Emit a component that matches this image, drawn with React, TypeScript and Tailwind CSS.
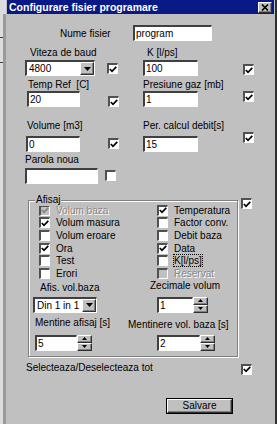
import React from "react";

function Check({ checked = false, disabled = false, className = "" }: { checked?: boolean; disabled?: boolean; className?: string }) {
  return (
    <div
      className={`w-[11px] h-[11px] shrink-0 border-t-2 border-l-2 border-t-[#505050] border-l-[#505050] border-b border-r border-b-white border-r-white flex items-center justify-center ${disabled ? "bg-[#c0c0c0]" : "bg-white"} ${className}`}
    >
      {checked && (
        <svg width="8" height="7" viewBox="0 0 8 7">
          <path d="M0.8 3 L3 5.3 L7.3 0.8" stroke={disabled ? "#808080" : "#000"} strokeWidth="1.7" fill="none" />
        </svg>
      )}
    </div>
  );
}

function Input({ value = "", className = "" }: { value?: string; className?: string }) {
  return (
    <div
      className={`h-[16px] shrink-0 bg-white border-t-2 border-l-2 border-t-[#404040] border-l-[#404040] border-b border-r border-b-white border-r-white pl-[1px] leading-[13px] text-black ${className}`}
    >
      {value}
    </div>
  );
}

function Raised({ className = "", children }: { className?: string; children?: React.ReactNode }) {
  return (
    <div
      className={`bg-[#c0c0c0] border border-t-white border-l-white border-b-[#303030] border-r-[#303030] shadow-[inset_-1px_-1px_0_#808080] flex items-center justify-center ${className}`}
    >
      {children}
    </div>
  );
}

function Down() {
  return (
    <svg width="7" height="4" viewBox="0 0 7 4">
      <path d="M0 0 H7 L3.5 4 Z" fill="#000" />
    </svg>
  );
}

function Up() {
  return (
    <svg width="5" height="3" viewBox="0 0 5 3">
      <path d="M0 3 H5 L2.5 0 Z" fill="#000" />
    </svg>
  );
}

function SmallDown() {
  return (
    <svg width="5" height="3" viewBox="0 0 5 3">
      <path d="M0 0 H5 L2.5 3 Z" fill="#000" />
    </svg>
  );
}

function Select({ value, className = "" }: { value: string; className?: string }) {
  return (
    <div
      className={`h-[16px] shrink-0 bg-white border-t-2 border-l-2 border-t-[#404040] border-l-[#404040] border-b border-r border-b-white border-r-white flex ${className}`}
    >
      <span className="flex-1 pl-[2px] leading-[13px]">{value}</span>
      <Raised className="w-[14px] h-[13px]">
        <Down />
      </Raised>
    </div>
  );
}

function Spinner({ value, inputClass }: { value: string; inputClass: string }) {
  return (
    <div className="flex h-[16px]">
      <Input value={value} className={inputClass} />
      <div className="flex flex-col w-[15px]">
        <Raised className="h-[8px] w-[15px]">
          <Up />
        </Raised>
        <Raised className="h-[8px] w-[15px]">
          <SmallDown />
        </Raised>
      </div>
    </div>
  );
}

function Item({ label, checked = false, disabled = false, focus = false }: { label: string; checked?: boolean; disabled?: boolean; focus?: boolean }) {
  return (
    <div className="flex items-center h-[12.6px]">
      <Check checked={checked} disabled={disabled} />
      <span
        className={`ml-[6px] leading-[11px] ${disabled ? "text-[#8a8a8a] [text-shadow:1px_1px_0_#ffffff]" : "text-black"} ${focus ? "outline outline-1 outline-dotted outline-black" : ""}`}
      >
        {label}
      </span>
    </div>
  );
}

export default function App() {
  return (
    <div className="w-[277px] h-[424px] flex font-['Liberation_Sans',Arial,sans-serif] text-[10px] text-black overflow-hidden">
      {/* left strip: other window behind */}
      <div className="w-[6px] h-full flex">
        <div className="w-[3px] h-full bg-[#dcdcdc] flex flex-col">
          <div className="h-[37px]" />
          <div className="h-[1px] w-[3px] bg-[#404040]" />
          <div className="h-[24px]" />
          <div className="h-[1px] w-[3px] bg-[#404040]" />
        </div>
        <div className="w-[3px] h-full flex flex-col">
          <div className="h-[14px] bg-[#dcdcf0]" />
          <div className="flex-1 bg-[#9a9a9a]" />
        </div>
      </div>

      {/* dialog */}
      <div className="flex-1 h-full bg-[#c0c0c0] border-r-2 border-r-[#303030] flex flex-col">
        {/* title bar */}
        <div className="h-[14px] mx-[1px] bg-[#0a1a84] flex items-center">
          <span className="pl-[2px] text-white font-bold text-[10.5px] leading-[14px] flex-1">Configurare fisier programare</span>
          <Raised className="w-[14px] h-[11px] mr-[2px]">
            <svg width="8" height="7" viewBox="0 0 8 7">
              <path d="M1 0.5 L7 6.5 M7 0.5 L1 6.5" stroke="#000" strokeWidth="1.6" />
            </svg>
          </Raised>
        </div>

        {/* Nume fisier */}
        <div className="flex items-center mt-[11px] h-[16px]">
          <span className="ml-[54px] w-[73px]">Nume fisier</span>
          <Input value="program" className="w-[79px]" />
        </div>

        {/* Viteza / K */}
        <div className="flex mt-[6px] h-[12px] leading-[12px]">
          <span className="ml-[24px] w-[117px]">Viteza de baud</span>
          <span>K [l/ps]</span>
        </div>
        <div className="flex items-start mt-[1px] h-[16px]">
          <Select value="4800" className="ml-[19px] w-[70px]" />
          <Check checked className="ml-[12px] mt-[3px]" />
          <Input value="100" className="ml-[25px] w-[55px]" />
          <Check checked className="ml-[45px] mt-[4px]" />
        </div>

        {/* Temp / Presiune */}
        <div className="flex mt-[3px] h-[12px] leading-[12px]">
          <span className="ml-[22px] w-[115px] whitespace-pre">Temp Ref  [C]</span>
          <span>Presiune gaz [mb]</span>
        </div>
        <div className="flex items-start h-[16px]">
          <Input value="20" className="ml-[21px] w-[53px]" />
          <Check checked className="ml-[28px] mt-[5px]" />
          <Input value="1" className="ml-[24px] w-[55px]" />
          <Check checked className="ml-[45px]" />
        </div>

        {/* Volume / Per calcul */}
        <div className="flex mt-[13px] h-[12px] leading-[12px]">
          <span className="ml-[21px] w-[116px]">Volume [m3]</span>
          <span>Per. calcul debit[s]</span>
        </div>
        <div className="flex items-start mt-[4px] h-[16px]">
          <Input value="0" className="ml-[20px] w-[54px]" />
          <Check checked className="ml-[28px] mt-[2px]" />
          <Input value="15" className="ml-[24px] w-[55px]" />
          <Check checked className="ml-[45px] mt-[-4px]" />
        </div>

        {/* Parola */}
        <div className="flex mt-[2px] h-[12px] leading-[12px]">
          <span className="ml-[19px]">Parola noua</span>
        </div>
        <div className="flex items-start mt-[2px] h-[16px]">
          <Input value="" className="ml-[19px] w-[73px]" />
          <Check className="ml-[7px] mt-[2px]" />
        </div>

        {/* Afisaj group */}
        <div className="flex items-start mt-[16px]">
          <div className="relative ml-[22px] w-[210px] border border-[#808080] shadow-[inset_1px_1px_0_#ffffff,1px_1px_0_#ffffff] pt-[3px] pb-[5px]">
            <span className="absolute top-[-7px] left-[6px] px-[1px] bg-[#c0c0c0] leading-[12px]">Afisaj</span>
            <div className="grid grid-cols-[118px_auto] ml-[10px]">
              <Item label="Volum baza" checked disabled />
              <Item label="Temperatura" checked />
              <Item label="Volum masura" checked />
              <Item label="Factor conv." />
              <Item label="Volum eroare" />
              <Item label="Debit baza" />
              <Item label="Ora" checked />
              <Item label="Data" checked />
              <Item label="Test" />
              <Item label="K[l/ps]" focus />
              <Item label="Erori" />
              <Item label="Reservat" disabled />
            </div>

            <div className="flex mt-[2px] h-[12px] leading-[12px]">
              <span className="ml-[11px] w-[110px]">Afis. vol.baza</span>
              <span className="mt-[-2px]">Zecimale volum</span>
            </div>
            <div className="flex items-start mt-[3px]">
              <Select value="Din 1 in 1" className="ml-[4px] w-[64px]" />
              <div className="ml-[60px]">
                <Spinner value="1" inputClass="w-[36px]" />
              </div>
            </div>

            <div className="flex mt-[4px] h-[12px] leading-[12px]">
              <span className="ml-[6px] w-[93px]">Mentine afisaj [s]</span>
              <span className="mt-[2px]">Mentinere vol. baza [s]</span>
            </div>
            <div className="flex items-start mt-[6px]">
              <div className="ml-[6px]">
                <Spinner value="5" inputClass="w-[42px]" />
              </div>
              <div className="ml-[65px]">
                <Spinner value="2" inputClass="w-[43px]" />
              </div>
            </div>
          </div>
          <Check checked className="ml-[3px] mt-[-2px]" />
        </div>

        {/* Selecteaza */}
        <div className="flex items-start mt-[5px] h-[12px]">
          <span className="ml-[20px] w-[215px] leading-[12px]">Selecteaza/Deselecteaza tot</span>
          <Check checked className="mt-[2px]" />
        </div>

        {/* Salvare */}
        <div className="flex mt-[24px]">
          <div className="ml-[160px] w-[67px] h-[16px] border border-black">
            <Raised className="w-full h-full">
              <span className="leading-[12px]">Salvare</span>
            </Raised>
          </div>
        </div>
      </div>
    </div>
  );
}
